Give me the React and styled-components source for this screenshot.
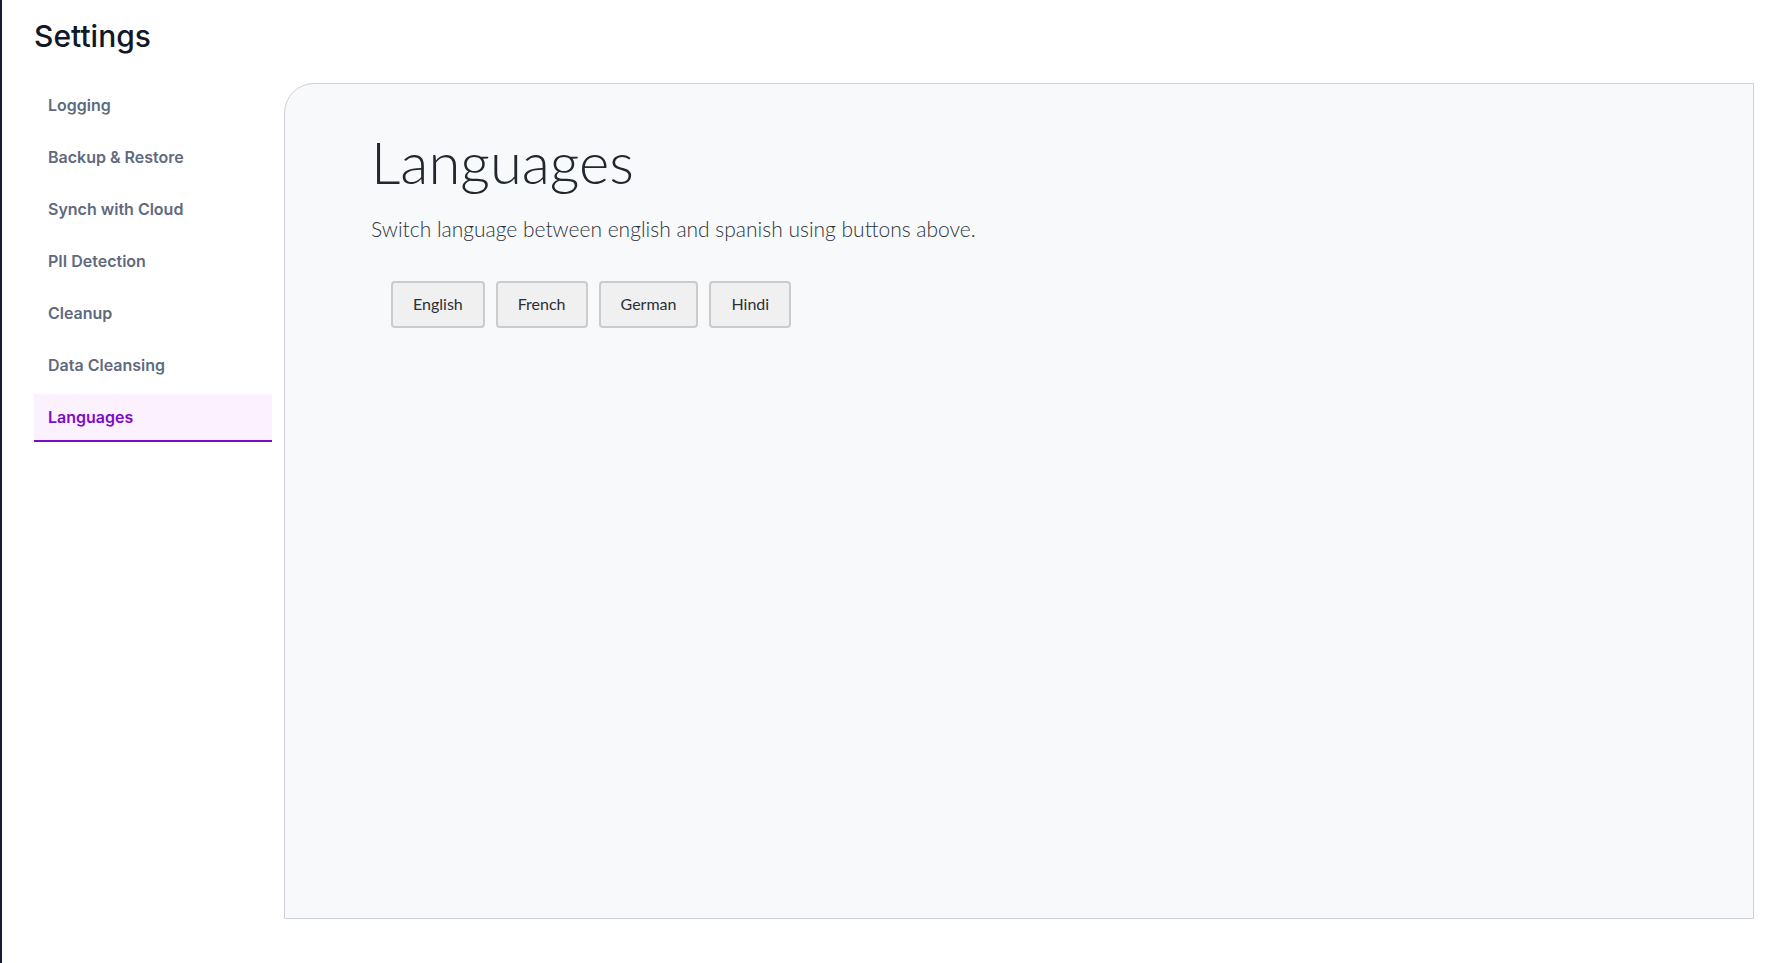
import React, { useState } from "react";
import styled, { createGlobalStyle } from "styled-components";

const GlobalStyle = createGlobalStyle`
  html, body {
    margin: 0;
    padding: 0;
    background: #ffffff;
  }
  * {
    box-sizing: border-box;
  }
`;

const Page = styled.div`
  height: 100vh;
  overflow: hidden;
  border-left: 2px solid #151b2b;
  padding: 18px 32px 0 32px;
  font-family: Inter, "Liberation Sans", sans-serif;
`;

const Title = styled.h1`
  margin: 0 0 29px 0;
  font-size: 30px;
  line-height: 36px;
  font-weight: 500;
  color: #111827;
`;

const Layout = styled.div`
  display: flex;
  gap: 12px;
  align-items: flex-start;
`;

const Sidebar = styled.nav`
  width: 238px;
  flex-shrink: 0;
  display: flex;
  flex-direction: column;
  gap: 4px;
  margin-top: -1px;
`;

const NavItem = styled.div`
  height: 48px;
  padding: 0 14px;
  display: flex;
  align-items: center;
  font-size: 16px;
  font-weight: 600;
  color: ${(p) => (p.$active ? "#7e0cc7" : "#5f6a80")};
  background: ${(p) => (p.$active ? "#fbf1ff" : "transparent")};
  border-bottom: 2px solid ${(p) => (p.$active ? "#7d0bc4" : "transparent")};
  cursor: pointer;
`;

const Panel = styled.section`
  flex: 1;
  height: 836px;
  background: #f8f9fb;
  border: 1px solid #cdd0d9;
  border-top-left-radius: 30px;
  padding: 43px 86px;
  font-family: Lato, "Open Sans", sans-serif;
`;

const Heading = styled.h2`
  margin: 0 0 19px 0;
  font-size: 58px;
  line-height: 1.2;
  font-weight: 300;
  color: #22272e;
`;

const Description = styled.p`
  margin: 0 0 40px 0;
  font-size: 21px;
  line-height: 1.2;
  font-weight: 300;
  color: #2f343b;
`;

const ButtonRow = styled.div`
  display: flex;
  gap: 11px;
  padding-left: 20px;
`;

const LangButton = styled.button`
  height: 47px;
  padding: 0 20px 1px;
  background: #f0f0f0;
  border: 2px solid #cbcbcb;
  border-radius: 4px;
  font-family: Lato, "Open Sans", sans-serif;
  font-size: 16px;
  color: #2b2f36;
  cursor: pointer;

  &:hover {
    background: #e8e8e8;
  }
`;

const navItems = [
  "Logging",
  "Backup & Restore",
  "Synch with Cloud",
  "PII Detection",
  "Cleanup",
  "Data Cleansing",
  "Languages",
];

const languages = ["English", "French", "German", "Hindi"];

export default function App() {
  const [active, setActive] = useState("Languages");

  return (
    <>
      <GlobalStyle />
      <Page>
        <Title>Settings</Title>
        <Layout>
          <Sidebar>
            {navItems.map((item) => (
              <NavItem
                key={item}
                $active={item === active}
                onClick={() => setActive(item)}
              >
                {item}
              </NavItem>
            ))}
          </Sidebar>
          <Panel>
            <Heading>Languages</Heading>
            <Description>
              Switch language between english and spanish using buttons above.
            </Description>
            <ButtonRow>
              {languages.map((lang) => (
                <LangButton key={lang}>{lang}</LangButton>
              ))}
            </ButtonRow>
          </Panel>
        </Layout>
      </Page>
    </>
  );
}
